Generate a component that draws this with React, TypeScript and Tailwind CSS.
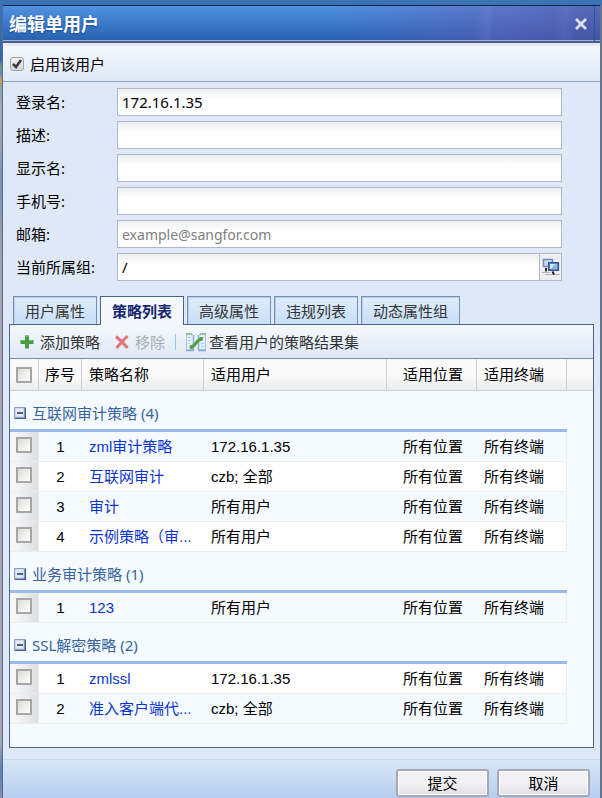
import { useState } from 'react';

const fields = [
  { id: 'login', label: '登录名:', value: '172.16.1.35' },
  { id: 'desc', label: '描述:', value: '' },
  { id: 'display', label: '显示名:', value: '' },
  { id: 'phone', label: '手机号:', value: '' },
  { id: 'email', label: '邮箱:', value: '', placeholder: 'example@sangfor.com' },
  { id: 'group', label: '当前所属组:', value: '/', picker: true },
];

const tabs = ['用户属性', '策略列表', '高级属性', '违规列表', '动态属性组'];

const groups = [
  {
    title: '互联网审计策略 (4)',
    rows: [
      { no: 1, name: 'zml审计策略', user: '172.16.1.35', tinted: true },
      { no: 2, name: '互联网审计', user: 'czb; 全部', tinted: false },
      { no: 3, name: '审计', user: '所有用户', tinted: true },
      { no: 4, name: '示例策略（审...', user: '所有用户', tinted: false },
    ],
  },
  {
    title: '业务审计策略 (1)',
    rows: [{ no: 1, name: '123', user: '所有用户', tinted: true }],
  },
  {
    title: 'SSL解密策略 (2)',
    rows: [
      { no: 1, name: 'zmlssl', user: '172.16.1.35', tinted: false },
      { no: 2, name: '准入客户端代...', user: 'czb; 全部', tinted: true },
    ],
  },
];

const PlusIcon = () => (
  <svg className="w-4 h-4" viewBox="0 0 16 16" fill="#4a9a42">
    <path d="M6 1.5h4V6h4.5v4H10v4.5H6V10H1.5V6H6z" />
    <path d="M6 1.5h4V3H6zM1.5 6H6v1H1.5zM10 6h4.5v1H10z" fill="#6db564" />
  </svg>
);

const RemoveIcon = () => (
  <svg className="w-4 h-4" viewBox="0 0 16 16" fill="none" stroke="#de7478" strokeWidth={3}>
    <path d="M2 2.5C5 5 10 9.500 13.500 14M13.500 2C10 5.500 6 10 2.500 14" />
  </svg>
);

const CompareIcon = () => (
  <svg className="w-5 h-5" viewBox="0 0 20 20" fill="none">
    <path d="M.5 1.500h5l2 2v14h-7zM19.500 1.500h-5l-2 2v14h7z" fill="#e4eefa" stroke="#a9c3e6" />
    <path d="M0 2h6M14 2h6" stroke="#7fbf7b" strokeWidth={1.5} />
    <path d="M2 5.500h3M2 8.500h3M2 11.500h2M15 5.500h3M15 11.500h3M15 14.500h3" stroke="#b4cbe8" />
    <path d="M7.500 3v15M12.500 3v15M0 18.500h8M12 18.500h8" stroke="#8aabd9" strokeWidth={1.5} />
    <path d="M5.500 15c3-1 3-2 4.500-4s2.500-3 5-4" stroke="#4d9d45" strokeWidth={3} strokeLinecap="round" />
    <circle cx="5.500" cy="15" r="2" fill="#4d9d45" />
    <circle cx="15" cy="7" r="2" fill="#4d9d45" />
  </svg>
);

const ComputersIcon = () => (
  <svg className="w-[18px] h-[18px]" viewBox="0 0 18 18" fill="none">
    <path d="M1.500 1.500h9v7h-9z" fill="#c9dcf2" stroke="#6f8bb8" strokeWidth={1.5} />
    <path d="M0 14.500h8" stroke="#b4b8be" />
    <path d="M4 10v3.500" stroke="#333" strokeWidth={2} />
    <path d="M6.800 4.800h9.500v7.500H6.800z" fill="#8ab5e8" stroke="#2f538f" strokeWidth={1.6} />
    <path d="M8 6h5l-4 5H8z" fill="#d5e6f9" />
    <path d="M3 16.500h15" stroke="#b0b4ba" />
    <path d="M10.500 13.500l1.500 3" stroke="#222" strokeWidth={2} />
  </svg>
);

const CollapseIcon = () => (
  <svg className="w-3 h-3" viewBox="0 0 12 12" fill="none">
    <path d="M.5.5h11v11H.5z" fill="#b9c9e2" stroke="#8a9fc2" />
    <path d="M1.500 1.500h8v8h-8z" fill="#e3eaf5" />
    <path d="M11.300 1v10.500H1" stroke="#3f5a8c" strokeWidth={1.5} />
    <path d="M3 6h6" stroke="#26427a" strokeWidth={1.6} />
  </svg>
);

const GridCheckbox = ({ label }: { label: string }) => (
  <input
    type="checkbox"
    aria-label={label}
    className="block w-4 h-4 ml-[6px] appearance-none border-2 border-[#a6a6a6] bg-linear-to-br from-[#dcdcd6] to-white checked:bg-[#8ab5e8]"
  />
);

const App = () => {
  const [active, setActive] = useState('策略列表');
  const [closed, setClosed] = useState<string[]>([]);

  const toggle = (title: string) =>
    setClosed(closed.includes(title) ? closed.filter((t) => t !== title) : [...closed, title]);

  return (
    <div className="min-h-screen flex flex-col pt-[5px] pl-[2px] text-[15px] leading-5 text-black bg-[linear-gradient(#3b74b5_0px,#3566a6_60px,#6fa06a_66px,#5d8dbd_74px,#c9a24b_80px,#8fa0b4_90px,#a8aeb8_110px,#8292ab_180px,#a8a8ac_290px,#a8a8ac_740px,#5d7fae_770px,#8792a5_798px)] font-['Noto_Sans','Noto_Sans_CJK_SC',sans-serif]">
      <div className="flex-1 flex flex-col border-l border-l-[#55699b] border-r-2 border-r-[#66748a] bg-[#dee8f6]">
        <header className="h-[38px] flex items-center pl-[6px] pr-[5px] border-t border-t-[#0a2350] border-b-2 border-b-[#4a5d8a] bg-[linear-gradient(95deg,transparent_79%,#8fa5e820_81%,transparent_82%,transparent_92%,#8f8fe020_94%,transparent_96%),linear-gradient(90deg,transparent_55%,#6a58b080_85%,#5a489890),linear-gradient(#5092df,#2860b0)] shadow-[inset_0_-1px_0_#9fb2d8]">
          <h1 className="text-lg font-bold text-white [text-shadow:0_1px_2px_#1f4d96]">编辑单用户</h1>
          <button aria-label="关闭" className="ml-auto mr-[5px] p-0.5">
            <svg className="w-3 h-3" viewBox="0 0 12 12" fill="none" stroke="#dfe3f6" strokeWidth={2.6}>
              <path d="M1 1l10 10M11 1L1 11" />
            </svg>
          </button>
          <span className="w-px self-stretch bg-[#235a94]" />
        </header>

        <div className="border-t-3 border-t-[#e6e8f2] border-b border-b-[#8ba3be] h-[39px] px-[7px] flex items-center bg-linear-to-b from-[#f4f8fc] to-[#dfe9f7]">
          <label className="flex items-center gap-[6px]">
            <span className="relative">
              <input
                type="checkbox"
                defaultChecked
                className="peer block w-[14px] h-[14px] appearance-none rounded-[3px] border border-[#a3a3a3] bg-linear-to-b from-[#f2f2f2] to-[#d8d8d8]"
              />
              <svg className="absolute inset-0 w-[14px] h-[14px] pointer-events-none hidden peer-checked:block" viewBox="0 0 14 14" fill="none" stroke="#3c3c3c" strokeWidth={2.6}>
                <path d="M3 7l3 3 5-7" />
              </svg>
            </span>
            启用该用户
          </label>
        </div>

        <form className="pt-[6px] pl-[13px] pr-[38px] flex flex-col gap-[5px]">
          {fields.map((field) => (
            <div key={field.id} className="flex items-center h-7">
              <label htmlFor={field.id} className="w-[101px] shrink-0">{field.label}</label>
              <div className="flex-1 flex h-7 border border-[#b2b6ca] bg-white">
                <input
                  id={field.id}
                  type="text"
                  defaultValue={field.value}
                  placeholder={field.placeholder}
                  className="flex-1 min-w-0 px-1 bg-linear-to-b from-[#eceeee] to-white to-40% outline-none placeholder:text-sm placeholder:text-[#808080]"
                />
                {field.picker && (
                  <button type="button" aria-label="选择组" className="w-[22px] shrink-0 flex items-center justify-center border-l border-[#b2b6ca] bg-[#eeeef0]">
                    <ComputersIcon />
                  </button>
                )}
              </div>
            </div>
          ))}
        </form>

        <div role="tablist" className="flex gap-[3px] pl-[10px] pt-[15px]">
          {tabs.map((tab) => (
            <button
              key={tab}
              role="tab"
              aria-selected={tab === active}
              onClick={() => setActive(tab)}
              className={
                tab === active
                  ? 'relative -mb-px h-[29px] px-[11px] border border-b-0 border-[#46628f] bg-[#f4f8fc] font-bold text-[#15286e]'
                  : 'h-7 px-[11px] border border-b-0 border-[#7390b8] bg-linear-to-b from-[#deecfa] to-[#c8dff7] text-[#333] shadow-[inset_1px_1px_0_#b9cdea]'
              }
            >
              {tab}
            </button>
          ))}
        </div>

        <main className="flex-1 mx-[6px] mb-[11px] border border-[#4b658d] bg-[#f5fafe]">
          <div className="h-[34px] flex items-center px-[9px] border-b border-[#7390b8] bg-linear-to-b from-[#f4f8fc] to-[#dfe8f7] text-[#333]">
            <button className="flex items-center gap-[5px]">
              <PlusIcon />
              添加策略
            </button>
            <button disabled className="ml-[14px] flex items-center gap-[5px] text-[#a9adb5]">
              <RemoveIcon />
              移除
            </button>
            <span className="w-px h-4 mx-[10px] bg-[#99c5f5]" />
            <button className="flex items-center gap-[3px]">
              <CompareIcon />
              查看用户的策略结果集
            </button>
          </div>

          <table className="w-full table-fixed border-separate border-spacing-0 text-left font-['Liberation_Sans','Noto_Sans_CJK_SC',sans-serif]">
            <colgroup>
              <col className="w-[29px]" />
              <col className="w-[43px]" />
              <col className="w-[122px]" />
              <col />
              <col className="w-[90px]" />
              <col className="w-[90px]" />
              <col className="w-[26px]" />
            </colgroup>
            <thead>
              <tr className="h-8 bg-linear-to-b from-[#fafafa] from-50% to-[#ebecee] *:border-b *:border-[#d0d0d0] *:font-normal *:p-0 [&>th:not(:last-child)]:border-r">
                <th><GridCheckbox label="全选" /></th>
                <th><div className="text-center">序号</div></th>
                <th><div className="pl-[7px]">策略名称</div></th>
                <th><div className="pl-[7px]">适用用户</div></th>
                <th><div className="pl-4">适用位置</div></th>
                <th><div className="pl-[7px]">适用终端</div></th>
                <th />
              </tr>
            </thead>
            {groups.map((group) => (
              <tbody key={group.title}>
                <tr className="h-[41px]">
                  <td colSpan={6} className="p-0 pt-[6px] border-b-3 border-[#99bbe8]">
                    <button onClick={() => toggle(group.title)} className="flex items-center gap-[6px] pl-1 text-[#3764a0] font-['Noto_Sans','Noto_Sans_CJK_SC',sans-serif]">
                      <CollapseIcon />
                      {group.title}
                    </button>
                  </td>
                </tr>
                {!closed.includes(group.title) &&
                  group.rows.map((row) => (
                    <tr key={row.no} className={`${row.tinted ? 'bg-[#f5fafe]' : 'bg-white'} h-[30px] *:p-0 *:border-[#ededed] [&>td:not(:last-child)]:border-b`}>
                      <td className="border-r bg-linear-to-r from-[#f5f6f8] from-20% to-[#dddfe2]">
                        <div className="pb-1"><GridCheckbox label={row.name} /></div>
                      </td>
                      <td className="text-center">{row.no}</td>
                      <td className="whitespace-nowrap">
                        <a href="#" className="pl-[7px] text-[#0c35cf]">{row.name}</a>
                      </td>
                      <td><div className="pl-[7px]">{row.user}</div></td>
                      <td><div className="pl-4">所有位置</div></td>
                      <td className="border-r"><div className="pl-[7px]">所有终端</div></td>
                      <td className="bg-[#f5fafe]" />
                    </tr>
                  ))}
              </tbody>
            ))}
          </table>
        </main>

        <footer className="h-[39px] flex justify-end gap-2 pt-[9px] pr-[10px] border-t border-[#c9d8e8] bg-linear-to-b from-[#d6e8f5] to-[#b8cdf0]">
          {['提交', '取消'].map((text) => (
            <button key={text} className="w-[93px] h-7 rounded-[3px] border-2 border-[#a5a8ba] bg-linear-to-b from-[#f2f2f5] from-50% to-[#dfe0e4] shadow-[inset_0_0_0_1px_#fff]">
              {text}
            </button>
          ))}
        </footer>
      </div>
    </div>
  );
};

export default App;
